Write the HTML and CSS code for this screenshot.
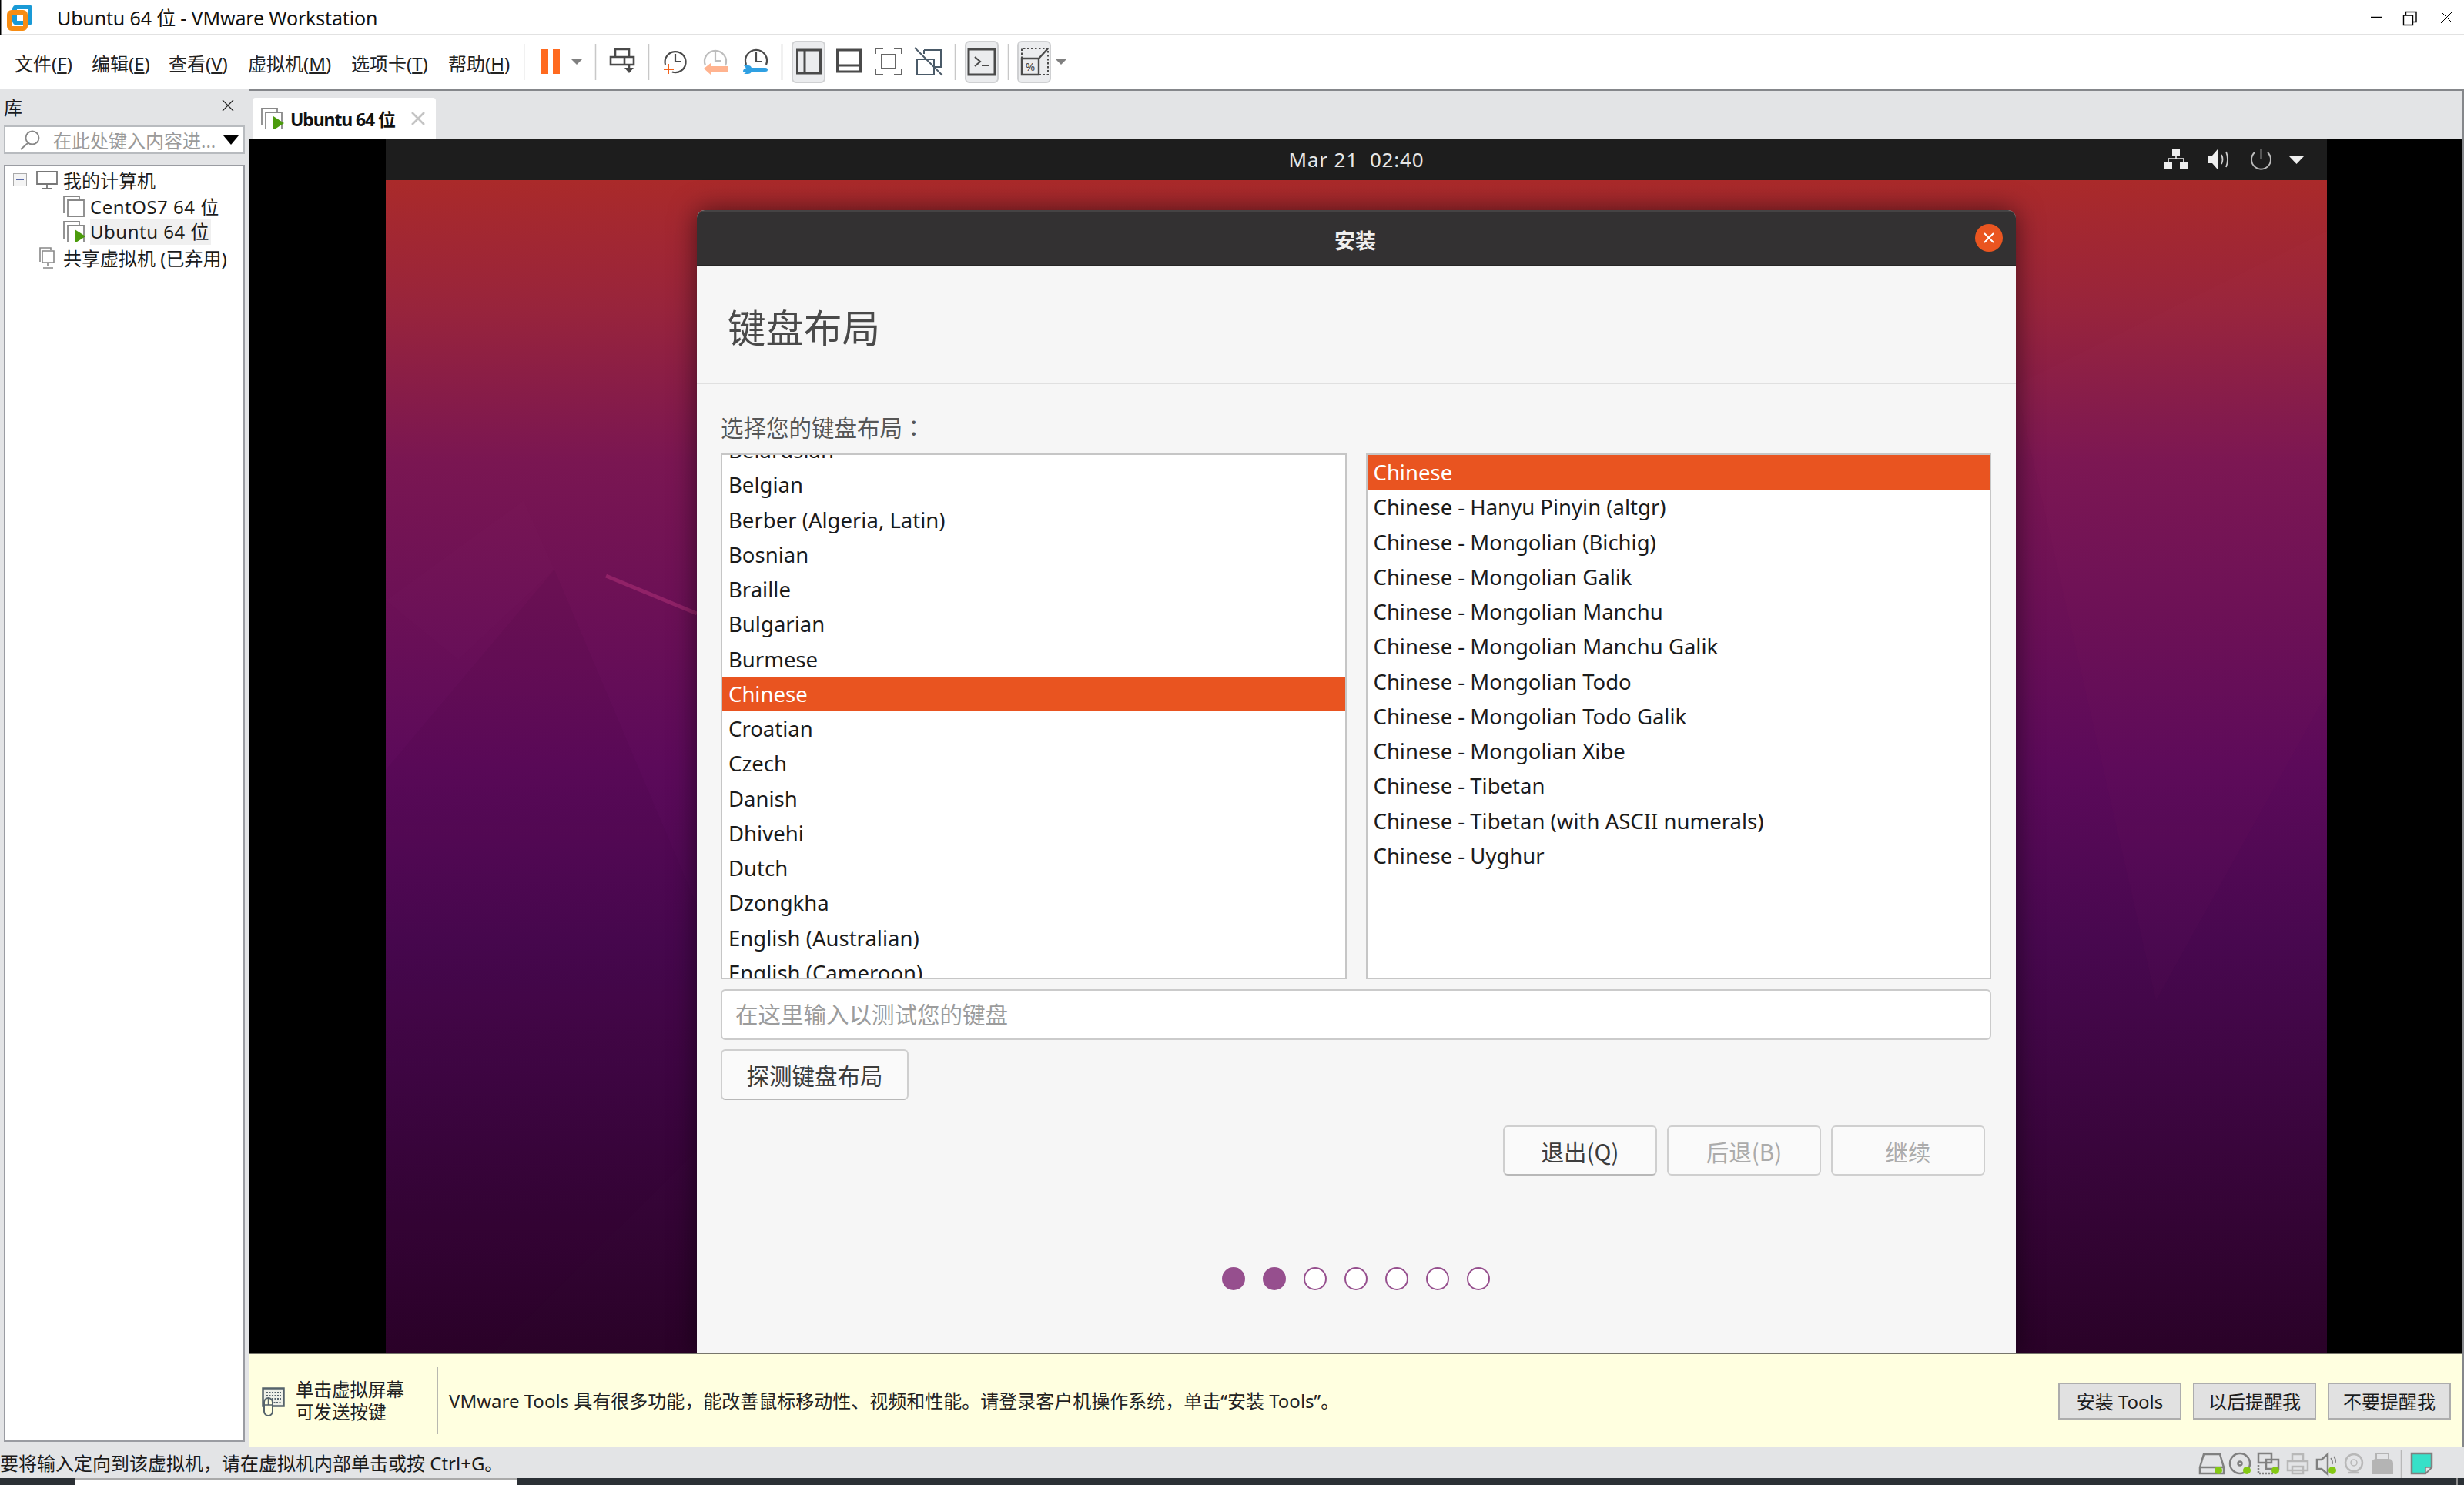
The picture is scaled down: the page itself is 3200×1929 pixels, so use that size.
FILE: index.html
```html
<!DOCTYPE html>
<html lang="zh-CN">
<head>
<meta charset="utf-8">
<title>Ubuntu 64 位 - VMware Workstation</title>
<link rel="stylesheet" href="styles.css">
</head>
<body>
<div class="app">
  <header class="titlebar">
    <svg class="logo" viewBox="0 0 42 45" width="42" height="45">
      <rect x="0" y="0" width="1.5" height="45" fill="#000"/>
      <rect x="19" y="9" width="21" height="21" rx="3" fill="none" stroke="#1a9ad6" stroke-width="6"/>
      <rect x="12" y="16" width="21" height="21" rx="3" fill="none" stroke="#f78c12" stroke-width="6"/>
    </svg>
    <span class="title-text">Ubuntu 64 位 - VMware Workstation</span>
    <svg class="winctl" viewBox="3060 0 140 45" width="140" height="45">
      <path d="M3079 22.5h14" stroke="#000" stroke-width="1.5" fill="none"/>
      <path d="M3121.5 20h12v12.5h-12z M3124.5 20v-4.5h13.500v13h-4.500" stroke="#000" stroke-width="1.400" fill="none"/>
      <path d="M3170 15l15 15M3185 15l-15 15" stroke="#000" stroke-width="1" fill="none"/>
    </svg>
  </header>

  <nav class="toolbar">
    <div class="menus">
      <span class="menu m1">文件(<u>F</u>)</span>
      <span class="menu m2">编辑(<u>E</u>)</span>
      <span class="menu m3">查看(<u>V</u>)</span>
      <span class="menu m4">虚拟机(<u>M</u>)</span>
      <span class="menu m5">选项卡(<u>T</u>)</span>
      <span class="menu m6">帮助(<u>H</u>)</span>
    </div>
    <svg class="tools" viewBox="680 46 710 70" width="710" height="70">
      <g stroke="#c8c8c8" stroke-width="1.500">
        <path d="M680.500 57v47M773.500 57v47M842.500 57v47M1015.500 57v47M1240.500 57v47M1309.500 57v47"/>
      </g>
      <rect x="703" y="64" width="9" height="32" fill="#ff6a1f"/>
      <rect x="718" y="64" width="9" height="32" fill="#ff6a1f"/>
      <path d="M741 76h16l-8 8z" fill="#808080"/>
      <g fill="none" stroke="#4a4a4a" stroke-width="2.600">
        <path d="M799 74v-10h18v10"/>
        <path d="M793 74h30v10h-30z M811 74v10"/>
        <path d="M817 84v9"/>
      </g>
      <path d="M811 88l6 7 6-7z" fill="#4a4a4a"/>
      <g fill="none" stroke="#4a4a4a" stroke-width="2.200">
        <path d="M864 84a13.500 13.500 0 1 1 9 9.500"/>
        <path d="M877 70v10h8"/>
      </g>
      <path d="M868 83v13M862 90h13" stroke="#f4631c" stroke-width="2"/>
      <g fill="none" stroke="#bdbdbd" stroke-width="2.200">
        <path d="M916 85a14 14 0 1 1 26 0"/>
        <path d="M929 68v11h8"/>
      </g>
      <path d="M914 89l9-7v4h22v7h-22v4z" fill="#ffb38f"/>
      <g fill="none" stroke="#4a4a4a" stroke-width="2.200">
        <path d="M969 84a14 14 0 1 1 26 0"/>
        <path d="M982 68v12h8"/>
      </g>
      <path d="M966 85h6q3 0 4 3h18q3 0 3 2.500t-3 2.500h-18q-1 3-5 3h-5q3-1 3-3h-4q0-2 1-3h3q0-3-3-5z" fill="#2fa0e2"/>

      <rect x="1029" y="54" width="42" height="53" rx="5" class="tbtn"/>
      <g fill="none" stroke="#4a4a4a" stroke-width="3">
        <path d="M1035.500 65h30v30h-30z M1045 65v30"/>
        <path d="M1087.500 65h30v28h-30z M1087.500 85h30"/>
      </g>
      <g fill="none" stroke="#666" stroke-width="2">
        <path d="M1147 63h-10v7M1161 63h10v7M1137 90v7h10M1171 90v7h-10"/>
        <path d="M1145 71h18v18h-18z"/>
      </g>
      <g fill="none" stroke="#4a5a68" stroke-width="2">
        <path d="M1200 65h22v22h-8M1200 65v5"/>
        <path d="M1191 77h22v20h-22z"/>
        <path d="M1188 62l36 36"/>
      </g>

      <rect x="1254" y="54" width="42" height="53" rx="5" class="tbtn"/>
      <path d="M1258 64h34v33h-34z" fill="none" stroke="#4a4a4a" stroke-width="3"/>
      <path d="M1266 74l7 6-7 6M1275 85h10" fill="none" stroke="#4a4a4a" stroke-width="2.200"/>

      <rect x="1322" y="54" width="42" height="53" rx="5" class="tbtn"/>
      <path d="M1327 76v-13h34v34h-12" fill="none" stroke="#4a4a4a" stroke-width="2" stroke-dasharray="2.500 2.500"/>
      <path d="M1327 76h22v21h-22z M1349 76l12-13" fill="none" stroke="#4a4a4a" stroke-width="2.400"/>
      <text x="1338" y="92" class="pct">%</text>
      <path d="M1370 76h16l-8 8z" fill="#808080"/>
    </svg>
  </nav>

  <div class="main">
    <aside class="sidebar">
      <div class="lib-head">
        <span class="lib-title">库</span>
        <svg class="lib-x" viewBox="0 0 16 16" width="16" height="16"><path d="M1 1l14 14M15 1L1 15" stroke="#222" stroke-width="1.200"/></svg>
      </div>
      <div class="search">
        <svg class="search-ico" viewBox="0 0 28 26" width="28" height="26"><circle cx="17" cy="10" r="8.500" fill="none" stroke="#888" stroke-width="1.800"/><path d="M11 17L2 25" stroke="#888" stroke-width="2"/></svg>
        <span class="search-text">在此处键入内容进...</span>
        <svg class="search-arrow" viewBox="0 0 20 12" width="20" height="12"><path d="M0 0h20l-10 12z" fill="#000"/></svg>
      </div>
      <div class="tree">
        <div class="row r0">
          <span class="expander"></span>
          <svg class="ico-mon" viewBox="0 0 28 24" width="28" height="24"><path d="M1 1h26v16H1z M14 17v5M7 23h14" fill="none" stroke="#777" stroke-width="1.800"/></svg>
          <span>我的计算机</span>
        </div>
        <div class="row r1">
          <svg class="ico-vm" viewBox="0 0 28 28" width="28" height="28"><path d="M1 23V1h20v4" fill="none" stroke="#888" stroke-width="1.800"/><path d="M6 6h21v22H6z" fill="#fff" stroke="#888" stroke-width="1.800"/></svg>
          <span>CentOS7 64 位</span>
        </div>
        <div class="row r1">
          <svg class="ico-vm" viewBox="0 0 28 28" width="28" height="28"><path d="M1 23V1h20v4" fill="none" stroke="#888" stroke-width="1.800"/><path d="M6 6h21v22H6z" fill="#fff" stroke="#888" stroke-width="1.800"/><path d="M15 11l14 9-14 9z" fill="#4b9b0c"/></svg>
          <span class="sel">Ubuntu 64 位</span>
        </div>
        <div class="row r2">
          <svg class="ico-share" viewBox="0 0 20 28" width="20" height="28"><path d="M1 19V1h14v3" fill="none" stroke="#888" stroke-width="1.600"/><path d="M4 5h15v15H4z M11 20v5M5 27h13" fill="#fff" stroke="#888" stroke-width="1.600"/></svg>
          <span>共享虚拟机 (已弃用)</span>
        </div>
      </div>
    </aside>

    <section class="content">
      <div class="tabbar">
        <div class="tab">
          <svg class="ico-tab" viewBox="0 0 30 28" width="30" height="28"><path d="M1 23V1h20v4" fill="none" stroke="#888" stroke-width="1.800"/><path d="M6 6h21v22H6z" fill="#fff" stroke="#888" stroke-width="1.800"/><path d="M16 11l14 9-14 9z" fill="#4b9b0c"/></svg>
          <span class="tab-label">Ubuntu 64 位</span>
          <svg class="tab-x" viewBox="0 0 18 18" width="18" height="18"><path d="M1 1l16 16M17 1L1 17" stroke="#c4c4c4" stroke-width="2.500"/></svg>
        </div>
      </div>

      <div class="viewport">
        <div class="guest">
          <div class="gpanel">
            <span></span>
            <span class="clock">Mar 21&nbsp; 02:40</span>
            <svg class="gicons" viewBox="2800 181 200 53" width="200" height="53">
              <g fill="#eee">
                <rect x="2821" y="193" width="10" height="9"/>
                <rect x="2811" y="210" width="10" height="9"/>
                <rect x="2831" y="210" width="10" height="9"/>
              </g>
              <path d="M2826 202v4M2816 210v-4h20v4" fill="none" stroke="#eee" stroke-width="1.600"/>
              <path d="M2868 202h5l7-8v26l-7-8h-5z" fill="#eee"/>
              <path d="M2885 201q3 6 0 12M2891 197q4 10 0 20" fill="none" stroke="#ccc" stroke-width="1.800"/>
              <path d="M2928 198a12.500 12.500 0 1 0 17 0" fill="none" stroke="#bbb" stroke-width="2"/>
              <path d="M2936.500 193v13" stroke="#ddd" stroke-width="1.600"/>
              <path d="M2973 203h19l-9.500 10z" fill="#eee"/>
            </svg>
          </div>
          <div class="desktop">
            <svg class="wall" viewBox="501 234 2521 1523" preserveAspectRatio="none">
              <path d="M720 740L1000 1400L640 1757L501 1757L501 1000Z" fill="#30003a" opacity=".06"/>
              <path d="M680 650L720 740L595 857L501 780Z" fill="#a0408a" opacity=".03"/>
              <path d="M2618 500L3022 300L3022 900L2800 1300Z" fill="#c04080" opacity=".025"/>
              <path d="M787 748L905 797" stroke="#a02a70" stroke-width="5" opacity=".7"/>
            </svg>
            <div class="dialog">
              <div class="dlg-head">
                <span class="dlg-title">安装</span>
                <span class="dlg-close"><svg viewBox="0 0 14 14" width="14" height="14"><path d="M1 1l12 12M13 1L1 13" stroke="#fff" stroke-width="2"/></svg></span>
              </div>
              <div class="dlg-heading"><h1>键盘布局</h1></div>
              <div class="dlg-body">
                <label class="kb-label">选择您的键盘布局<span class="colon" lang="zh-TW">：</span></label>
                <div class="lists">
                  <ul class="list list-left">
                    <li>Belarusian</li>
                    <li>Belgian</li>
                    <li>Berber (Algeria, Latin)</li>
                    <li>Bosnian</li>
                    <li>Braille</li>
                    <li>Bulgarian</li>
                    <li>Burmese</li>
                    <li class="on">Chinese</li>
                    <li>Croatian</li>
                    <li>Czech</li>
                    <li>Danish</li>
                    <li>Dhivehi</li>
                    <li>Dutch</li>
                    <li>Dzongkha</li>
                    <li>English (Australian)</li>
                    <li>English (Cameroon)</li>
                  </ul>
                  <ul class="list list-right">
                    <li class="on">Chinese</li>
                    <li>Chinese - Hanyu Pinyin (altgr)</li>
                    <li>Chinese - Mongolian (Bichig)</li>
                    <li>Chinese - Mongolian Galik</li>
                    <li>Chinese - Mongolian Manchu</li>
                    <li>Chinese - Mongolian Manchu Galik</li>
                    <li>Chinese - Mongolian Todo</li>
                    <li>Chinese - Mongolian Todo Galik</li>
                    <li>Chinese - Mongolian Xibe</li>
                    <li>Chinese - Tibetan</li>
                    <li>Chinese - Tibetan (with ASCII numerals)</li>
                    <li>Chinese - Uyghur</li>
                  </ul>
                </div>
                <div class="kb-input">在这里输入以测试您的键盘</div>
                <button class="gtk-btn detect">探测键盘布局</button>
                <div class="actions">
                  <button class="gtk-btn act">退出(Q)</button>
                  <button class="gtk-btn act off">后退(B)</button>
                  <button class="gtk-btn act off">继续</button>
                </div>
                <div class="dots">
                  <i class="dot full"></i><i class="dot full"></i><i class="dot"></i><i class="dot"></i><i class="dot"></i><i class="dot"></i><i class="dot"></i>
                </div>
              </div>
            </div>
          </div>
        </div>
      </div>

      <div class="hintbar">
        <svg class="hint-ico" viewBox="0 0 30 38" width="30" height="38">
          <rect x="1.500" y="1.500" width="27" height="23" fill="#eef0e8" stroke="#55636b" stroke-width="2.500"/>
          <path d="M6 7h19M6 11h19M6 15h19M12 20h13" stroke="#55636b" stroke-width="2" stroke-dasharray="2 1.500"/>
          <rect x="3" y="14" width="11" height="23" rx="5.500" fill="#ffffe0" stroke="#55636b" stroke-width="2"/>
          <path d="M3 23h11M8.500 14v9" stroke="#55636b" stroke-width="1.500"/>
        </svg>
        <div class="hint-left">单击虚拟屏幕<br>可发送按键</div>
        <div class="hint-msg">VMware Tools 具有很多功能，能改善鼠标移动性、视频和性能。请登录客户机操作系统，单击“安装 Tools”。</div>
        <button class="hint-btn">安装 Tools</button>
        <button class="hint-btn">以后提醒我</button>
        <button class="hint-btn">不要提醒我</button>
      </div>
    </section>
  </div>

  <footer class="status">
    <span class="status-text">要将输入定向到该虚拟机，请在虚拟机内部单击或按 Ctrl+G。</span>
    <svg class="status-icons" viewBox="2840 1880 360 40" width="360" height="40">
      <g fill="none" stroke="#808080" stroke-width="2.500">
        <path d="M2857 1906l5-17h21l5 17v8h-31z M2857 1906h31"/>
        <circle cx="2909" cy="1901" r="13"/>
        <circle cx="2909" cy="1901" r="2.500"/>
        <path d="M2933 1888h17v12h-17z M2943 1896h16v12h-16z"/>
        <path d="M2933 1903v11h20" stroke-dasharray="2 2"/>
        <path d="M3009 1896h6l8-7v26l-8-7h-6z"/>
        <path d="M3027 1894q3 4 2 8M3031 1892q3 4 2 8" stroke-width="1.500"/>
      </g>
      <g fill="none" stroke="#b8b8b8" stroke-width="2.500">
        <path d="M2977 1898v-9h14v9 M2971 1898h26v12h-26z M2977 1905h14v9h-14z"/>
        <circle cx="3057" cy="1900" r="11"/>
        <circle cx="3057" cy="1900" r="4" stroke-width="1.500"/>
        <path d="M3050 1913h14"/>
      </g>
      <path d="M3080 1901q0-6 6-6h16q6 0 6 6v14h-28z" fill="#b4b4b4"/>
      <rect x="3086" y="1888" width="16" height="9" fill="none" stroke="#b4b4b4" stroke-width="2"/>
      <g fill="#84c814">
        <circle cx="2881" cy="1910" r="5"/><circle cx="2918" cy="1910" r="5"/><circle cx="2955" cy="1910" r="5"/><circle cx="3029" cy="1910" r="5"/>
      </g>
      <path d="M3118.500 1883v37" stroke="#b8b8b8" stroke-width="1.500"/>
      <path d="M3132 1888h26v18l-8 8h-18z" fill="#36e0c8" stroke="#808080" stroke-width="2.500"/>
      <path d="M3150 1914v-8h8z" fill="#e3e4e6" stroke="#808080" stroke-width="1.500"/>
    </svg>
  </footer>

  <div class="taskstrip">
    <span class="task-a"></span>
    <span class="task-b"></span>
    <span class="task-c"></span>
    <span class="task-d"></span>
  </div>
</div>
</body>
</html>
```
FILE: styles.css
```css
* { box-sizing: border-box; }
html, body { margin: 0; padding: 0; }
body {
  width: 3200px;
  height: 1929px;
  overflow: hidden;
  background: #e3e4e6;
  color: #1a1a1a;
  font-family: "Noto Sans", "Noto Sans CJK SC", sans-serif;
}
.app { display: flex; flex-direction: column; width: 3200px; height: 1929px; }

/* Title bar */
.titlebar {
  display: flex;
  align-items: center;
  height: 46px;
  background: #fff;
  border-bottom: 2px solid #e2e2e2;
}
.logo { flex: none; }
.title-text { margin-left: 32px; font-size: 25px; letter-spacing: -0.15px; color: #111; }
.winctl { margin-left: auto; }

/* Toolbar */
.toolbar { display: flex; height: 70px; background: #fff; align-items: center; }
.menus { display: flex; width: 680px; padding-left: 19px; font-size: 24px; color: #222; }
.menu { white-space: nowrap; }
.m1, .m2, .m3 { width: 100px; }
.m4 { width: 134px; }
.m5 { width: 126px; }
.m3 { width: 103px; }
.tools { flex: none; }
.tbtn { fill: #ebecee; stroke: #cfd0d2; stroke-width: 2; }
.pct { font-size: 15px; fill: #444; text-anchor: middle; font-family: "Noto Sans", sans-serif; }

/* Main */
.main { display: flex; height: 1764px; }
.sidebar { width: 323px; flex: none; display: flex; flex-direction: column; padding-left: 5px; background: #e3e4e6; }
.lib-head { display: flex; align-items: center; height: 47px; padding-bottom: 2px; }
.lib-title { font-size: 24px; margin-left: 0; }
.lib-x { margin-left: auto; margin-right: 19px; margin-top: -4px; }
.search {
  display: flex;
  align-items: center;
  width: 313px;
  height: 37px;
  background: #fff;
  border: 2px solid #b8bbbf;
}
.search-ico { margin-left: 18px; }
.search-text { margin-left: 16px; font-size: 24px; color: #9a9a9a; white-space: nowrap; }
.search-arrow { margin-left: auto; margin-right: 6px; }
.tree {
  width: 313px;
  height: 1659px;
  margin-top: 14px;
  padding-top: 1px;
  background: #fff;
  border: 2px solid #9a9ca2;
  font-size: 24px;
  color: #1c1c1c;
}
.row { display: flex; align-items: center; height: 33.7px; white-space: nowrap; }
.r0 { padding-left: 10px; }
.r1 { padding-left: 75px; letter-spacing: 0.5px; }
.r2 { padding-left: 44px; }
.expander {
  position: relative;
  width: 18px;
  height: 17px;
  border: 1.5px solid #aaa;
  background: #f4f4f4;
}
.expander::after {
  content: "";
  position: absolute;
  left: 3px;
  right: 3px;
  top: 6px;
  height: 2px;
  background: #5a6aa8;
}
.ico-mon { margin: 0 7px 0 12px; }
.ico-vm { margin-right: 7px; }
.ico-share { margin-right: 11px; }
.sel { background: #f0f0f0; padding: 0 2px 0 0; line-height: 34px; }

/* Content */
.content { flex: 1; display: flex; flex-direction: column; border-top: 2px solid #85878b; border-right: 2px solid #85878b; min-width: 0; }
.tabbar { height: 63px; flex: none; background: #e3e4e6; padding: 9px 0 0 5px; }
.tab {
  display: flex;
  align-items: center;
  width: 238px;
  height: 54px;
  padding-left: 11px;
  background: #fff;
  border-radius: 4px 4px 0 0;
}
.tab-label { margin-left: 8px; font-size: 23px; font-weight: 700; letter-spacing: -1.1px; color: #111; white-space: nowrap; }
.tab-x { margin-left: auto; margin-right: 14px; }

.viewport { flex: none; height: 1576px; background: #000; display: flex; justify-content: center; }
.guest { width: 2521px; margin-left: 2px; display: flex; flex-direction: column; overflow: hidden; }
.gpanel {
  flex: none;
  display: grid;
  grid-template-columns: 1fr auto 1fr;
  align-items: center;
  height: 53px;
  background: #1d1d1d;
}
.clock { color: #e6e6e6; font-size: 26px; letter-spacing: 0.8px; white-space: pre; margin-top: -2px; }
.gicons { justify-self: end; margin-right: 22px; }

.desktop {
  position: relative;
  flex: 1;
  display: flex;
  justify-content: center;
  padding-top: 39px;
  background: linear-gradient(180deg, #aa2a2a 0%, #98243c 11%, #7a1652 24%, #5c0a5a 50%, #48084f 65%, #2a0228 100%);
}
.wall { position: absolute; inset: 0; width: 100%; height: 100%; }
.dialog {
  position: relative;
  display: flex;
  flex-direction: column;
  width: 1713px;
  background: #f6f6f6;
  border-radius: 10px 10px 0 0;
  box-shadow: 0 0 34px rgba(0, 0, 0, .55);
}
.dlg-head {
  flex: none;
  display: flex;
  align-items: center;
  justify-content: center;
  position: relative;
  height: 73px;
  padding-top: 3px;
  background: #333132;
  border-top: 2px solid #454344;
  border-bottom: 2px solid #262525;
  border-radius: 10px 10px 0 0;
}
.dlg-title { color: #eeeeee; font-size: 27px; font-weight: 700; margin-right: 3px; }
.dlg-close {
  position: absolute;
  right: 17px;
  top: 16px;
  display: flex;
  align-items: center;
  justify-content: center;
  width: 36px;
  height: 36px;
  border-radius: 50%;
  background: #ea5520;
}
.dlg-heading { flex: none; display: flex; align-items: center; height: 153px; padding: 4px 0 0 40px; border-bottom: 2px solid #e0e0e0; }
.dlg-heading h1 { margin: 0; font-size: 49.500px; font-weight: 400; color: #4a4a4a; }
.dlg-body { flex: 1; display: flex; flex-direction: column; padding: 0 32px 0 31px; }
.kb-label { display: block; height: 90px; padding-top: 32px; font-size: 29.500px; line-height: 46px; color: #565656; }
.colon { font-family: "Noto Sans CJK TC", sans-serif; }
.lists { display: flex; gap: 25px; height: 683px; }
.list {
  flex: 1;
  margin: 0;
  padding: 0;
  list-style: none;
  overflow: hidden;
  background: #fff;
  border: 2px solid #c6c6c6;
  font-family: "Noto Sans", "Noto Sans CJK SC", sans-serif;
  font-size: 27.500px;
  color: #1b1b1b;
}
.list li { height: 45.25px; line-height: 45.25px; padding-left: 8px; white-space: nowrap; }
.list li.on { background: #e95420; color: #fff; }
.list-left li:first-child { margin-top: -29px; }
.kb-input {
  display: flex;
  align-items: center;
  height: 66px;
  margin-top: 13px;
  padding: 0 0 3px 17px;
  background: #fff;
  border: 2px solid #cbcbcb;
  border-radius: 6px;
  font-size: 29.500px;
  color: #9c9c9c;
}
.gtk-btn {
  display: block;
  background: #fafafa;
  border: 2px solid #cfcfcf;
  border-bottom-color: #b8b8b8;
  border-radius: 6px;
  font-family: "Noto Sans CJK SC", "Noto Sans", sans-serif;
  font-size: 29.500px;
  color: #3d3d3d;
  padding: 0;
}
.detect { width: 244px; height: 66px; margin-top: 12px; }
.actions { display: flex; justify-content: flex-end; gap: 13px; margin-top: 33px; padding-right: 8px; }
.act { width: 200px; height: 65px; }
.act.off { color: #ababab; border-bottom-color: #cfcfcf; }
.dots { display: flex; justify-content: center; gap: 23px; margin-top: 119px; margin-right: 1px; }
.dot { width: 30px; height: 30px; border-radius: 50%; border: 2px solid #964f8e; background: #fff; }
.dot.full { background: #964f8e; }

/* Hint bar */
.hintbar {
  flex: none;
  display: flex;
  align-items: center;
  height: 123px;
  padding-left: 17px;
  background: #ffffe0;
  border-top: 2px solid #77766c;
  font-size: 24px;
  color: #222;
}
.hint-ico { flex: none; margin-top: 2px; }
.hint-left { width: 198px; padding-left: 14px; line-height: 29px; font-size: 23.500px; }
.hint-msg { flex: 1; align-self: center; height: 87px; line-height: 87px; padding-left: 14px; border-left: 1.500px solid #b8b8b0; font-size: 24px; white-space: nowrap; }
.hint-btn {
  flex: none;
  width: 160px;
  height: 48px;
  margin-right: 15px;
  background: #e1e1e1;
  border: 2px solid #adadad;
  font-family: "Noto Sans", "Noto Sans CJK SC", sans-serif;
  font-size: 24px;
  color: #1c1c1c;
  padding: 0;
}

/* Status */
.status { display: flex; align-items: center; height: 40px; background: #e3e4e6; }
.status-text { font-size: 24px; color: #1a1a1a; white-space: nowrap; margin-top: -2px; }
.status-icons { margin-left: auto; flex: none; }
.taskstrip { display: flex; height: 9px; background: #2b3035; }
.task-a { width: 97px; }
.task-b { width: 574px; background: #fff; border-top: 2px solid #aaa; }
.task-c { width: 2519px; }
.task-d { width: 2px; background: #8c8c8c; }
```
